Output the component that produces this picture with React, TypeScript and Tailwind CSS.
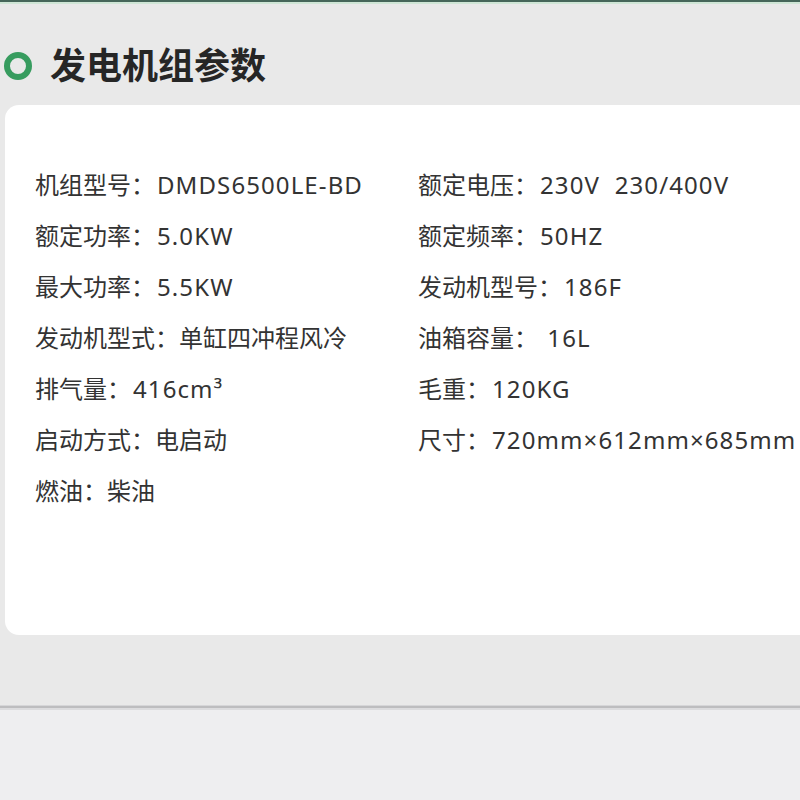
import React from "react";

type Item = [string, string, boolean];

const left: Item[] = [
  ["机组型号：", "DMDS6500LE-BD", true],
  ["额定功率：", "5.0KW", true],
  ["最大功率：", "5.5KW", true],
  ["发动机型式：", "单缸四冲程风冷", false],
  ["排气量：", "416cm³", true],
  ["启动方式：", "电启动", false],
  ["燃油：", "柴油", false],
];
const right: Item[] = [
  ["额定电压：", "230V\u00a0\u00a0230/400V", true],
  ["额定频率：", "50HZ", true],
  ["发动机型号：", "186F", true],
  ["油箱容量：", "\u00a016L", true],
  ["毛重：", "120KG", true],
  ["尺寸：", "720mm×612mm×685mm", true],
];

function Row({ k, v, latin }: { k: string; v: string; latin: boolean }) {
  return (
    <div className="h-[51px] flex items-center whitespace-nowrap text-[24px] text-[#333333]">
      <span>{k}</span>
      <span className={latin ? "ml-[2px] tracking-[1.1px]" : ""}>{v}</span>
    </div>
  );
}

export default function App() {
  return (
    <div
      className="w-[800px] h-[800px] overflow-hidden bg-[#e9e9e9] flex flex-col"
      style={{ fontFamily: '"Noto Sans", "Noto Sans CJK SC", sans-serif' }}
    >
      <div className="h-[2px] bg-[#46665a] shrink-0" />
      <div className="h-[2px] bg-[#cfe6d6] shrink-0" />
      <div className="flex items-center h-[60px] mt-[32px] shrink-0">
        <div className="ml-[4px] w-[28px] h-[28px] rounded-full border-[6px] border-[#379c5f]" />
        <div className="ml-[18px] text-[36px] font-bold text-[#262626] leading-none">发电机组参数</div>
      </div>
      <div className="ml-[5px] mt-[9px] w-[830px] h-[530px] bg-white rounded-l-[14px] shrink-0 flex pt-[54px]">
        <div className="w-[413px] pl-[30px] flex flex-col">
          {left.map(([k, v, l]) => (
            <Row key={k} k={k} v={v} latin={l} />
          ))}
        </div>
        <div className="flex flex-col">
          {right.map(([k, v, l]) => (
            <Row key={k} k={k} v={v} latin={l} />
          ))}
        </div>
      </div>
      <div className="h-[70px] shrink-0" />
      <div className="h-[1px] bg-[#d6d6d8] shrink-0" />
      <div className="h-[2px] bg-[#bdbdbf] shrink-0" />
      <div className="h-[2px] bg-[#dcdcde] shrink-0" />
      <div className="flex-1 bg-[#eeeef0]" />
    </div>
  );
}
